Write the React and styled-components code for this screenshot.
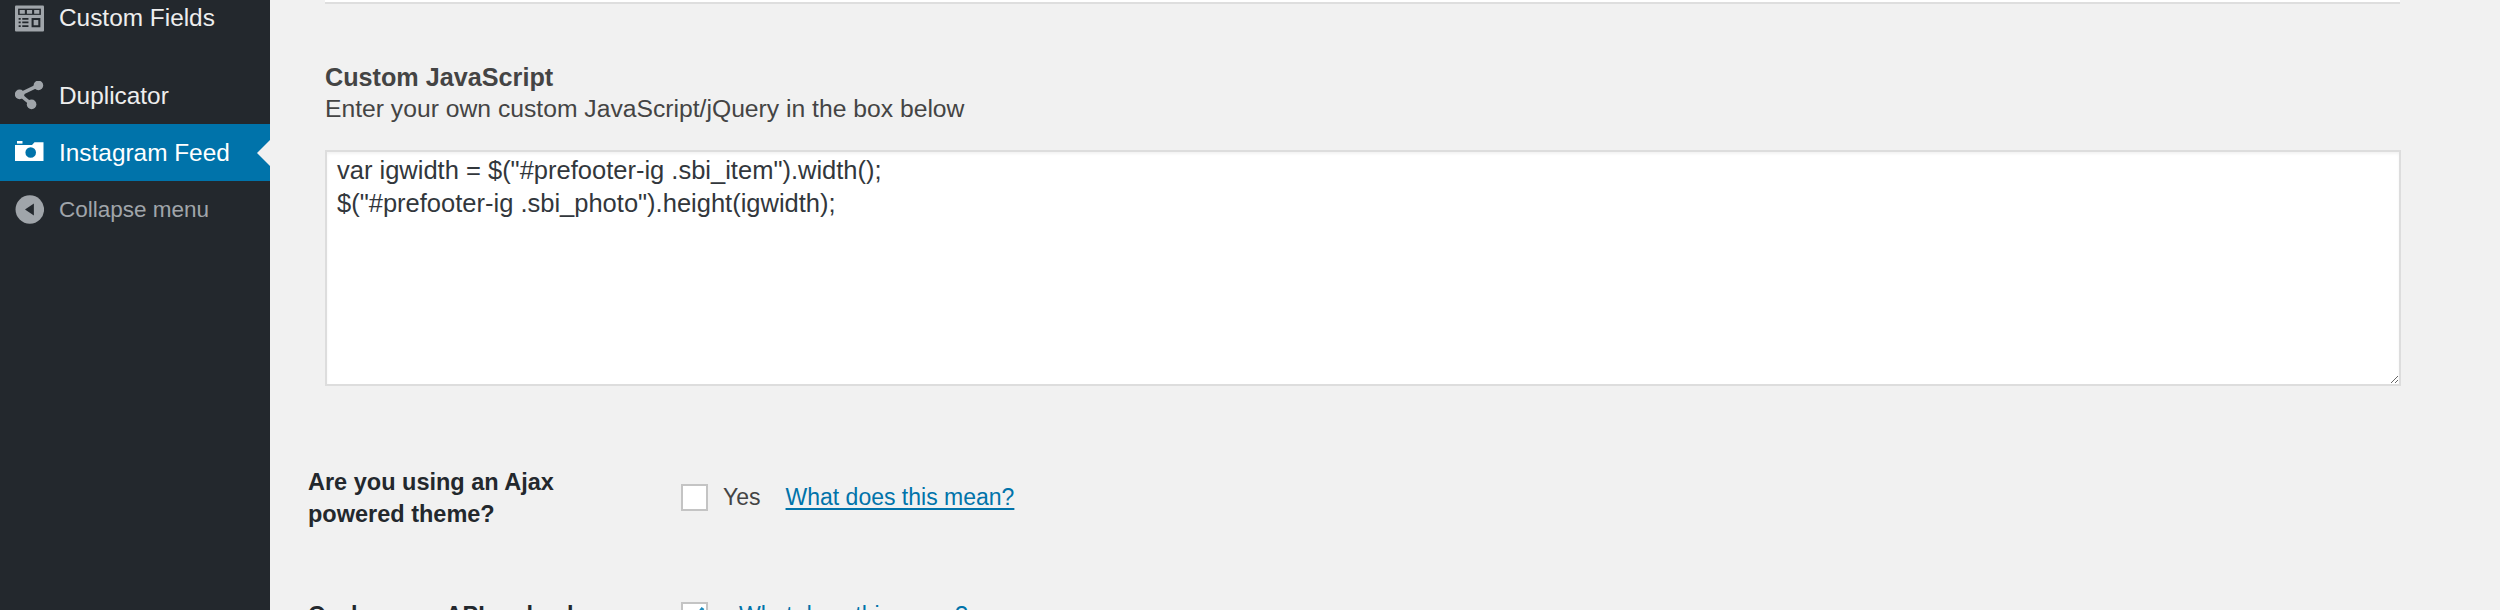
import React from 'react';
import styled, { createGlobalStyle } from 'styled-components';

const GlobalStyle = createGlobalStyle`
  html, body {
    margin: 0;
    padding: 0;
    height: 610px;
    overflow: hidden;
    background: #f1f1f1;
  }
`;

const Page = styled.div`
  display: flex;
  width: 2500px;
  height: 610px;
  overflow: hidden;
  font-family: "Liberation Sans", Arial, sans-serif;
`;

const Sidebar = styled.nav`
  width: 270px;
  flex: none;
  background: #23282d;
  display: flex;
  flex-direction: column;
`;

const MenuRow = styled.div`
  display: flex;
  align-items: center;
  position: relative;
  height: ${(p) => p.$height || 57}px;
  margin-bottom: ${(p) => p.$gap || 0}px;
  padding-left: 15px;
  gap: 15px;
  font-size: ${(p) => (p.$muted ? 22.5 : 24.4)}px;
  color: ${(p) => (p.$muted ? '#a0a5aa' : p.$active ? '#fff' : '#eee')};
  background: ${(p) => (p.$active ? '#0073aa' : 'transparent')};

  svg {
    flex: none;
    width: 29px;
    height: 29px;
  }

  ${(p) => p.$active && `
    &::after {
      content: '';
      position: absolute;
      right: 0;
      top: 50%;
      margin-top: -13px;
      border: 13px solid transparent;
      border-left-width: 0;
      border-right-color: #f1f1f1;
    }
  `}
`;

const Main = styled.main`
  flex: 1;
  min-width: 0;
  padding-left: 38px;
`;

const TopBox = styled.div`
  margin-left: 17px;
  width: 2075px;
  height: 2px;
  background: #fff;
  border-bottom: 2px solid #dedede;
`;

const Section = styled.section`
  margin-left: 17px;
  padding-top: 57px;
`;

const Heading = styled.h3`
  margin: 0;
  font-size: 25.2px;
  line-height: 33px;
  font-weight: 700;
  color: #444;
`;

const Description = styled.p`
  margin: 0 0 26px;
  font-size: 24.7px;
  line-height: 30px;
  color: #444;
`;

const CodeBox = styled.textarea`
  display: block;
  box-sizing: border-box;
  width: 2076px;
  height: 236px;
  margin: 0;
  padding: 2px 10px;
  border: 2px solid #ddd;
  box-shadow: inset 0 2px 3px rgba(0, 0, 0, 0.05);
  background: #fff;
  font-family: inherit;
  font-size: 25.5px;
  line-height: 33px;
  color: #32373c;
  outline: none;
`;

const SettingRow = styled.div`
  display: flex;
  margin-top: ${(p) => p.$top}px;
`;

const SettingLabel = styled.div`
  width: 373px;
  flex: none;
  font-size: 23.5px;
  line-height: 32px;
  font-weight: 700;
  color: #23282d;
`;

const SettingValue = styled.div`
  display: flex;
  align-items: center;
  height: 32px;
  margin-top: ${(p) => p.$top || 0}px;
  font-size: 23px;
  color: #444;
`;

const CheckBox = styled.span`
  display: flex;
  box-sizing: border-box;
  align-items: center;
  justify-content: center;
  width: 27px;
  height: 27px;
  flex: none;
  background: #fff;
  border: 2px solid #c4c4c4;
  margin-right: ${(p) => p.$gap}px;
  svg { width: 23px; height: 23px; flex: none; }
`;

const YesText = styled.span`
  margin-right: 25px;
`;

const HelpLink = styled.a`
  color: #0073aa;
  text-decoration: underline;
  text-decoration-thickness: 2px;
  text-underline-offset: 3px;
`;

const GridIcon = () => (
  <svg viewBox="0 0 28 25">
    <rect width="28" height="25" rx="1" fill="#a0a5aa" />
    <path d="M3 3h22v6H3z" fill="#23282d" />
    <path d="M4.5 4.2h5v3.6h-5zM11.5 4.2h5v3.6h-5zM18.5 4.2h5v3.6h-5z" fill="#a0a5aa" />
    <path d="M3.5 12h2v1.6h-2zM7 12h6v1.6H7zM3.5 15.5h2v1.6h-2zM7 15.5h6v1.6H7zM3.5 19h2v1.6h-2zM7 19h6v1.6H7z" fill="#23282d" />
    <path d="M16 12h8.5v9H16zM18 14v5h4.5v-5z" fillRule="evenodd" fill="#23282d" />
  </svg>
);

const ShareIcon = () => (
  <svg viewBox="0 0 29 29" fill="#a0a5aa">
    <circle cx="4.6" cy="13.4" r="4.8" />
    <circle cx="23.4" cy="4.4" r="4.8" />
    <circle cx="16.6" cy="23.4" r="4.8" />
    <path d="M4.6 13.4L23.4 4.4M4.6 13.4L16.6 23.4" stroke="#a0a5aa" strokeWidth="3.4" fill="none" />
  </svg>
);

const CameraIcon = () => (
  <svg viewBox="0 0 29 29" fill="#fff">
    <path fillRule="evenodd" d="M0 7H17L19.5 4.3H28.5V23H0zM21 14.5a5.3 5.3 0 1 0-10.6 0a5.3 5.3 0 0 0 10.6 0z" />
    <path d="M2 3h5.5v2.6H2z" />
  </svg>
);

const CollapseIcon = () => (
  <svg viewBox="0 0 27 27">
    <circle cx="13.8" cy="13.5" r="13.3" fill="#a0a5aa" />
    <path d="M9.3 13.5L17.6 8v11z" fill="#23282d" />
  </svg>
);

const CheckMark = () => (
  <svg viewBox="0 0 23 23" fill="none" stroke="#1e8cbe" strokeWidth="3.5">
    <path d="M4 12l5 6l11-14" />
  </svg>
);

const App = () => (
  <>
    <GlobalStyle />
    <Page>
      <Sidebar>
        <MenuRow $height={36} $gap={31}><GridIcon />Custom Fields</MenuRow>
        <MenuRow><ShareIcon />Duplicator</MenuRow>
        <MenuRow $active><CameraIcon />Instagram Feed</MenuRow>
        <MenuRow $muted><CollapseIcon />Collapse menu</MenuRow>
      </Sidebar>
      <Main>
        <TopBox />
        <Section>
          <Heading>Custom JavaScript</Heading>
          <Description>Enter your own custom JavaScript/jQuery in the box below</Description>
          <CodeBox
            readOnly
            spellCheck={false}
            defaultValue={'var igwidth = $("#prefooter-ig .sbi_item").width();\n$("#prefooter-ig .sbi_photo").height(igwidth);'}
          />
        </Section>
        <SettingRow $top={80}>
          <SettingLabel>
            <div>Are you using an Ajax</div>
            <div>powered theme?</div>
          </SettingLabel>
          <SettingValue $top={15}>
            <CheckBox $gap={15} />
            <YesText>Yes</YesText>
            <HelpLink>What does this mean?</HelpLink>
          </SettingValue>
        </SettingRow>
        <SettingRow $top={69}>
          <SettingLabel>Cache error API recheck</SettingLabel>
          <SettingValue>
            <CheckBox $gap={31}><CheckMark /></CheckBox>
            <HelpLink>What does this mean?</HelpLink>
          </SettingValue>
        </SettingRow>
      </Main>
    </Page>
  </>
);

export default App;
